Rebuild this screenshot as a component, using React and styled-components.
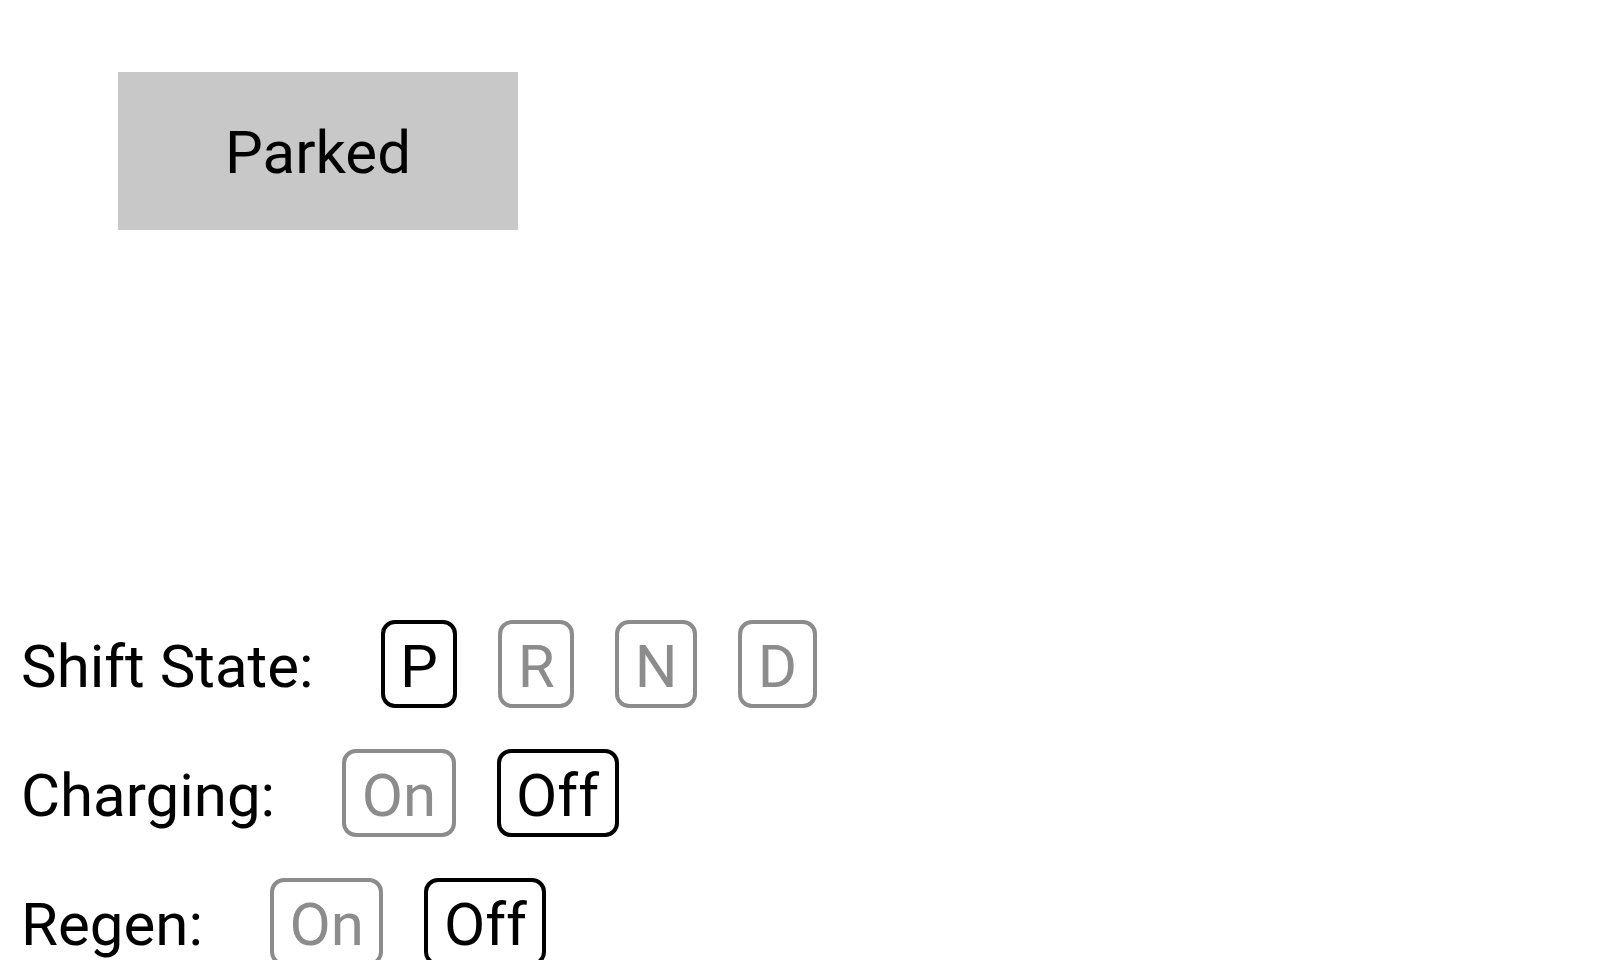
import React from "react";
import styled, { createGlobalStyle } from "styled-components";

const Global = createGlobalStyle`
  html, body { margin: 0; padding: 0; background: #ffffff; }
  body { font-family: Roboto, "Liberation Sans", sans-serif; color: #000; overflow: hidden; }
`;

const Page = styled.div`
  display: flex;
  flex-direction: column;
  align-items: flex-start;
  padding: 72px 0 0 21px;
  width: 1600px;
  height: 960px;
  box-sizing: border-box;
`;

const StatusBox = styled.div`
  flex-shrink: 0;
  margin-left: 97px;
  width: 400px;
  height: 158px;
  box-sizing: border-box;
  padding-top: 3px;
  background: #c8c8c8;
  display: flex;
  align-items: center;
  justify-content: center;
  font-size: 60px;
  line-height: 1;
`;

const Controls = styled.div`
  flex-shrink: 0;
  margin-top: 390px;
  display: flex;
  flex-direction: column;
  gap: 41px;
`;

const Row = styled.div`
  display: flex;
  align-items: baseline;
`;

const Label = styled.span`
  font-size: 60px;
  line-height: 72px;
  margin-right: 67px;
`;

const Options = styled.div`
  display: flex;
  align-items: baseline;
  gap: 41px;
`;

const Option = styled.span`
  font-size: 60px;
  line-height: 72px;
  padding: 7px 15.5px 1px;
  border: 4px solid ${(p) => (p.$active ? "#000000" : "#8c8c8c")};
  color: ${(p) => (p.$active ? "#000000" : "#8c8c8c")};
  border-radius: 14px;
`;

function OptionRow({ label, options, active }) {
  return (
    <Row>
      <Label>{label}</Label>
      <Options>
        {options.map((o) => (
          <Option key={o} $active={o === active}>
            {o}
          </Option>
        ))}
      </Options>
    </Row>
  );
}

export default function App() {
  return (
    <>
      <Global />
      <Page>
        <StatusBox>Parked</StatusBox>
        <Controls>
          <OptionRow label="Shift State:" options={["P", "R", "N", "D"]} active="P" />
          <OptionRow label="Charging:" options={["On", "Off"]} active="Off" />
          <OptionRow label="Regen:" options={["On", "Off"]} active="Off" />
        </Controls>
      </Page>
    </>
  );
}
